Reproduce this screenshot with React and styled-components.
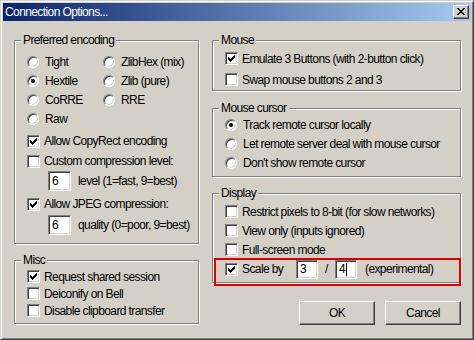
import React from 'react';
import styled, { createGlobalStyle } from 'styled-components';

const FACE = '#d4d0c8';

const Global = createGlobalStyle`
  html, body { margin: 0; padding: 0; background: ${FACE}; }
  body { font-family: "Liberation Sans", Arial, sans-serif; font-size: 12px; }
`;

const Window = styled.div`
  position: relative;
  box-sizing: border-box;
  width: 474px;
  height: 340px;
  background: ${FACE};
  border: 1px solid;
  border-color: ${FACE} #404040 #404040 ${FACE};
  box-shadow: inset 1px 1px #fff, inset -1px -1px #808080;
  padding: 2px;
  display: flex;
  flex-direction: column;
  font-family: "Liberation Sans", Arial, sans-serif;
  font-size: 12px;
  letter-spacing: -0.6px;
  color: #000;
`;

const TitleBar = styled.div`
  flex: none;
  height: 18px;
  box-sizing: border-box;
  background: linear-gradient(to right, #0a246a, #a6caf0);
  display: flex;
  align-items: center;
  justify-content: space-between;
  padding: 0 2px;
`;

const TitleText = styled.span`
  color: #fff;
  line-height: 18px;
  white-space: nowrap;
`;

const CloseButton = styled.div`
  box-sizing: border-box;
  width: 16px;
  height: 14px;
  background: ${FACE};
  border: 1px solid;
  border-color: #fff #404040 #404040 #fff;
  box-shadow: inset -1px -1px #808080;
  display: flex;
  align-items: flex-start;
  justify-content: flex-start;
  padding: 2px 0 0 3px;
`;

const Body = styled.div`
  display: grid;
  grid-template-columns: 185px 249px;
  column-gap: 13px;
  padding: 13px 10px 0 11px;
`;

const Column = styled.div`
  display: flex;
  flex-direction: column;
`;

const Group = styled.fieldset`
  margin: ${p => p.$mt || 0}px 0 0 0;
  padding: 0;
  min-width: 0;
  border: 1px solid #808080;
  box-shadow: inset 1px 1px #fff, 1px 1px #fff;
`;

const Legend = styled.legend`
  margin-left: 6px;
  padding: 0 2px;
  line-height: 13px;
  background: ${FACE};
  white-space: nowrap;
`;

const GroupContent = styled.div`
  display: flex;
  flex-direction: column;
  padding: ${p => p.$pad};
`;

const RadioGrid = styled.div`
  display: grid;
  grid-template-columns: 76px auto;
  grid-auto-rows: 19px;
`;

const Option = styled.div`
  display: flex;
  align-items: center;
  height: ${p => p.$h || 19}px;
  margin-top: ${p => p.$mt || 0}px;
  white-space: nowrap;
`;

const RadioCircle = styled.span`
  flex: none;
  box-sizing: border-box;
  width: 12px;
  height: 12px;
  border-radius: 50%;
  background: #fff;
  border: 1px solid;
  border-color: #808080 #fff #fff #808080;
  box-shadow: inset 1px 1px #404040, inset -1px -1px ${FACE};
  display: flex;
  align-items: center;
  justify-content: center;
  margin-right: 6px;
`;

const RadioDot = styled.span`
  width: 4px;
  height: 4px;
  border-radius: 50%;
  background: #000;
`;

const CheckBox = styled.span`
  flex: none;
  box-sizing: border-box;
  width: 13px;
  height: 13px;
  background: #fff;
  border: 1px solid;
  border-color: #808080 #fff #fff #808080;
  box-shadow: inset 1px 1px #404040, inset -1px -1px ${FACE};
  padding: 2px 0 0 2px;
  margin-right: ${p => p.$mr || 4}px;
  display: flex;
`;

const EditBox = styled.span`
  flex: none;
  box-sizing: border-box;
  width: ${p => p.$w}px;
  height: ${p => p.$h}px;
  background: #fff;
  border: 1px solid;
  border-color: #808080 #fff #fff #808080;
  box-shadow: inset 1px 1px #404040, inset -1px -1px ${FACE};
  padding-left: 3px;
  display: flex;
  align-items: center;
  margin-right: ${p => p.$mr || 0}px;
`;

const Caret = styled.span`
  width: 1px;
  height: 13px;
  background: #000;
  margin-left: 1px;
`;

const Indent = styled.div`
  display: flex;
  align-items: center;
  height: ${p => p.$h}px;
  margin-top: ${p => p.$mt || 0}px;
  padding-left: ${p => p.$pl}px;
  white-space: nowrap;
`;

const FixedLabel = styled.span`
  width: ${p => p.$w}px;
  flex: none;
  padding-left: ${p => p.$pl || 0}px;
  box-sizing: border-box;
`;

const ButtonRow = styled.div`
  display: flex;
  justify-content: flex-end;
  gap: 10px;
  margin-top: 18px;
`;

const PushButton = styled.div`
  box-sizing: border-box;
  width: 76px;
  height: 24px;
  background: ${FACE};
  border: 1px solid;
  border-color: #fff #404040 #404040 #fff;
  box-shadow: inset -1px -1px #808080;
  display: flex;
  align-items: center;
  justify-content: center;
`;

const Annotation = styled.div`
  position: absolute;
  box-sizing: border-box;
  left: 213px;
  top: 257px;
  width: 247px;
  height: 28px;
  border: 2px solid #dc0000;
  pointer-events: none;
`;

const checkRuns = [
  [6, 0, 1], [5, 1, 2], [0, 2, 1], [4, 2, 3], [0, 3, 2], [3, 3, 3], [0, 4, 5], [1, 5, 3], [2, 6, 1],
];

const CheckMark = () => (
  <svg width="7" height="7" viewBox="0 0 7 7" shapeRendering="crispEdges">
    {checkRuns.map(([x, y, w], i) => (
      <rect key={i} x={x} y={y} width={w} height={1} fill="#000" />
    ))}
  </svg>
);

const xRuns = [
  [0, 0, 2], [6, 0, 2], [1, 1, 2], [5, 1, 2], [2, 2, 4], [3, 3, 2], [2, 4, 4], [1, 5, 2], [5, 5, 2], [0, 6, 2], [6, 6, 2],
];

const CloseGlyph = () => (
  <svg width="8" height="7" viewBox="0 0 8 7" shapeRendering="crispEdges">
    {xRuns.map(([x, y, w], i) => (
      <rect key={i} x={x} y={y} width={w} height={1} fill="#000" />
    ))}
  </svg>
);

const Radio = ({ on, children, h }) => (
  <Option $h={h}>
    <RadioCircle>{on && <RadioDot />}</RadioCircle>
    <span>{children}</span>
  </Option>
);

const Check = ({ on, children, h, mt }) => (
  <Option $h={h} $mt={mt}>
    <CheckBox>{on && <CheckMark />}</CheckBox>
    <span>{children}</span>
  </Option>
);

export default function App() {
  return (
    <>
      <Global />
      <Window>
        <TitleBar>
          <TitleText>Connection Options...</TitleText>
          <CloseButton>
            <CloseGlyph />
          </CloseButton>
        </TitleBar>
        <Body>
          <Column>
            <Group>
              <Legend>Preferred encoding</Legend>
              <GroupContent $pad="5px 0 8px 12px">
                <RadioGrid>
                  <Radio>Tight</Radio>
                  <Radio>ZlibHex (mix)</Radio>
                  <Radio on>Hextile</Radio>
                  <Radio>Zlib (pure)</Radio>
                  <Radio>CoRRE</Radio>
                  <Radio>RRE</Radio>
                  <Radio>Raw</Radio>
                </RadioGrid>
                <Check on h={20} mt={3}>Allow CopyRect encoding</Check>
                <Check h={20}>Custom compression level:</Check>
                <Indent $h={20} $pl={21}>
                  <EditBox $w={23} $h={20} $mr={7}>6</EditBox>
                  <span>level (1=fast, 9=best)</span>
                </Indent>
                <Check on h={20} mt={3}>Allow JPEG compression:</Check>
                <Indent $h={20} $mt={1} $pl={21}>
                  <EditBox $w={23} $h={20} $mr={7}>6</EditBox>
                  <span>quality (0=poor, 9=best)</span>
                </Indent>
              </GroupContent>
            </Group>
            <Group $mt={10}>
              <Legend>Misc</Legend>
              <GroupContent $pad="1px 0 4px 12px">
                <Check on h={17}>Request shared session</Check>
                <Check h={17}>Deiconify on Bell</Check>
                <Check h={17}>Disable clipboard transfer</Check>
              </GroupContent>
            </Group>
          </Column>
          <Column>
            <Group>
              <Legend>Mouse</Legend>
              <GroupContent $pad="1px 0 0 12px">
                <Check on h={21}>Emulate 3 Buttons (with 2-button click)</Check>
                <Check h={21}>Swap mouse buttons 2 and 3</Check>
              </GroupContent>
            </Group>
            <Group $mt={11}>
              <Legend>Mouse cursor</Legend>
              <GroupContent $pad="0 0 4px 12px">
                <Radio on>Track remote cursor locally</Radio>
                <Radio>Let remote server deal with mouse cursor</Radio>
                <Radio>Don't show remote cursor</Radio>
              </GroupContent>
            </Group>
            <Group $mt={10}>
              <Legend>Display</Legend>
              <GroupContent $pad="2px 0 3px 12px">
                <Check>Restrict pixels to 8-bit (for slow networks)</Check>
                <Check>View only (inputs ignored)</Check>
                <Check>Full-screen mode</Check>
                <Option $h={20}>
                  <CheckBox><CheckMark /></CheckBox>
                  <FixedLabel $w={54}>Scale by</FixedLabel>
                  <EditBox $w={22} $h={19}>3</EditBox>
                  <FixedLabel $w={17} $pl={7}>/</FixedLabel>
                  <EditBox $w={22} $h={19} $mr={8}>4<Caret /></EditBox>
                  <span>(experimental)</span>
                </Option>
              </GroupContent>
            </Group>
            <ButtonRow>
              <PushButton>OK</PushButton>
              <PushButton>Cancel</PushButton>
            </ButtonRow>
          </Column>
        </Body>
        <Annotation />
      </Window>
    </>
  );
}
